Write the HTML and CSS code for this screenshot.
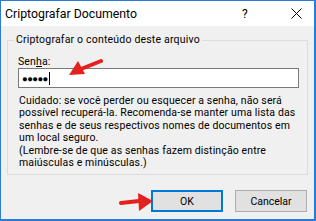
FILE: index.html
```html
<!DOCTYPE html>
<html>
<head>
<meta charset="utf-8">
<link rel="stylesheet" href="styles.css">
</head>
<body>
<div class="window">
  <div class="titlebar">
    <span class="title">Criptografar Documento</span>
    <span class="help">?</span>
    <span class="close">
      <svg width="11" height="11" viewBox="0 0 11 11"><path d="M0.5 0.5 L10.5 10.5 M10.5 0.5 L0.5 10.5" stroke="#000" stroke-width="1" fill="none"/></svg>
    </span>
  </div>
  <div class="body">
    <fieldset class="group">
      <legend class="legend">Criptografar o conteúdo deste arquivo</legend>
      <div class="label">Sen<u>h</u>a:</div>
      <div class="input"><span class="dots">●●●●●</span><span class="caret"></span></div>
      <p class="note">Cuidado: se você perder ou esquecer a senha, não será<br>possível recuperá-la. Recomenda-se manter uma lista das<br>senhas e de seus respectivos nomes de documentos em<br>um local seguro.<br>(Lembre-se de que as senhas fazem distinção entre<br>maiúsculas e minúsculas.)</p>
    </fieldset>
    <div class="buttons">
      <div class="btn ok">OK</div>
      <div class="btn">Cancelar</div>
    </div>
  </div>
  <svg class="arrow arrow1" width="36" height="22" viewBox="0 0 36 22">
    <path d="M34 3 L14 11" stroke="#e3211e" stroke-width="4" stroke-linecap="round"/>
    <path d="M2 17 L11 3 L18 16 Z" fill="#e3211e"/>
  </svg>
  <svg class="arrow arrow2" width="36" height="22" viewBox="0 0 36 22">
    <path d="M2 12 L20 10" stroke="#e3211e" stroke-width="4" stroke-linecap="round"/>
    <path d="M34 10 L19 2 L20 20 Z" fill="#e3211e"/>
  </svg>
</div>
</body>
</html>
```
FILE: styles.css
```css
html, body {
  margin: 0;
  padding: 0;
}
body {
  font-family: Roboto, "Noto Sans", sans-serif;
  font-size: 10.5px;
  color: #000;
}
.window {
  position: relative;
  width: 316px;
  height: 221px;
  box-sizing: border-box;
  border: 1px solid #2b7bd3;
  border-right-width: 2px;
  border-bottom-width: 2px;
  display: flex;
  flex-direction: column;
  background: #f0f0f0;
}
.titlebar {
  height: 25px;
  background: #fff;
  display: flex;
  align-items: center;
  padding-left: 4px;
}
.title {
  font-size: 12.3px;
  flex: 1;
}
.help {
  font-size: 12px;
  width: 12px;
  margin-right: 37px;
}
.close {
  display: flex;
  margin-right: 12px;
}
.body {
  flex: 1;
  padding: 6px 6px 0 6px;
  display: flex;
  flex-direction: column;
}
.group {
  margin: 0;
  border: 1px solid #dcdcdc;
  padding: 0 6px 5px 10px;
  box-sizing: border-box;
}
.legend {
  padding: 0 2px;
  margin-left: -4px;
  font-size: 10.5px;
  letter-spacing: 0.19px;
  line-height: 16px;
}
.label {
  margin-top: 7px;
  line-height: 13px;
  letter-spacing: 0.13px;
}
.input {
  height: 20px;
  box-sizing: border-box;
  border: 1px solid #7a7a7a;
  background: #fff;
  display: flex;
  align-items: center;
  padding-left: 3px;
  width: 281px;
}
.dots {
  font-size: 9.5px;
  letter-spacing: -0.6px;
}
.caret {
  width: 1px;
  height: 13px;
  background: #000;
  margin-left: 1px;
}
.note {
  margin: 7px 0 0 1px;
  line-height: 12.4px;
  letter-spacing: 0.13px;
  white-space: nowrap;
}
.buttons {
  display: flex;
  justify-content: flex-end;
  gap: 12px;
  margin-top: 15px;
  padding-right: 1px;
}
.btn {
  width: 72px;
  height: 22px;
  box-sizing: border-box;
  border: 1px solid #adadad;
  background: #e1e1e1;
  display: flex;
  align-items: center;
  justify-content: center;
}
.btn.ok {
  border: 2px solid #0078d7;
}
.arrow {
  position: absolute;
}
.arrow1 {
  left: 66px;
  top: 57px;
}
.arrow2 {
  left: 118px;
  top: 190px;
}
```
